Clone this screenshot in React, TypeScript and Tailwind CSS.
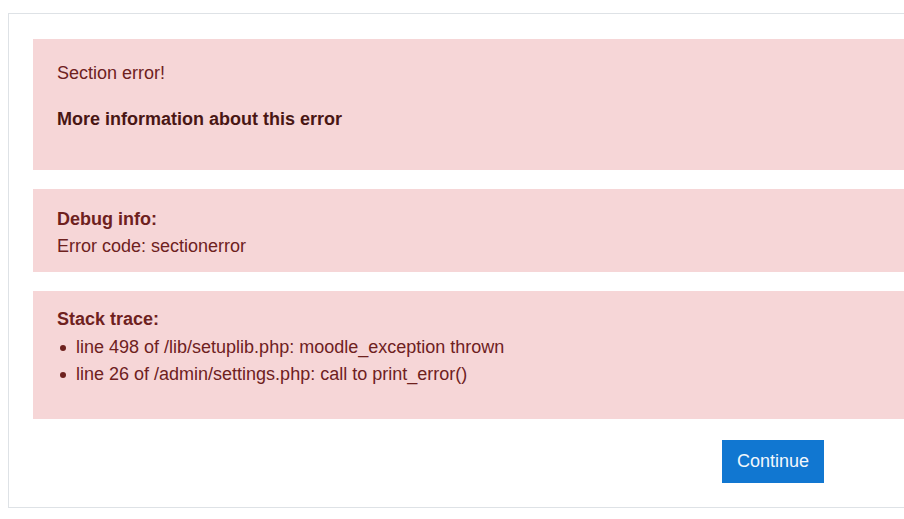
export default function App() {
  const trace = [
    "line 498 of /lib/setuplib.php: moodle_exception thrown",
    "line 26 of /admin/settings.php: call to print_error()",
  ];

  return (
    <div className="w-[904px] h-[519px] overflow-hidden bg-white pl-[8px] pt-[13px] font-['Liberation_Sans',Arial,sans-serif] text-[18px] leading-[27px]">
      {/* Main box, wider than the viewport */}
      <div className="w-[1530px] border border-[#dee2e6] px-[24px] pt-[25px] pb-[24px]">
        <div className="bg-[#f6d6d7] text-[#6e211e] pl-[24px] pt-[21px] pb-[37px] mb-[19px]">
          <p className="mb-[19px]">Section error!</p>
          <p className="font-bold text-[#491614]">More information about this error</p>
        </div>

        <div className="bg-[#f6d6d7] text-[#6e211e] pl-[24px] pt-[17px] pb-[12px] mb-[19px]">
          <p className="font-bold">Debug info:</p>
          <p>Error code: sectionerror</p>
        </div>

        <div className="bg-[#f6d6d7] text-[#6e211e] pl-[24px] pt-[15px] pb-[31px] mb-[21px]">
          <p className="font-bold mb-[1px]">Stack trace:</p>
          <ul className="pl-[19px]">
            {trace.map((t) => (
              <li key={t} className="flex items-center">
                <span className="w-[6px] h-[6px] rounded-full bg-[#6e211e] mr-[10px] -ml-[16px]" />
                <span>{t}</span>
              </li>
            ))}
          </ul>
        </div>

        <div className="flex justify-center">
          <button className="bg-[#1177d1] text-[#f2f7fc] px-[15px] py-[8px] leading-[27px]">
            Continue
          </button>
        </div>
      </div>
    </div>
  );
}
